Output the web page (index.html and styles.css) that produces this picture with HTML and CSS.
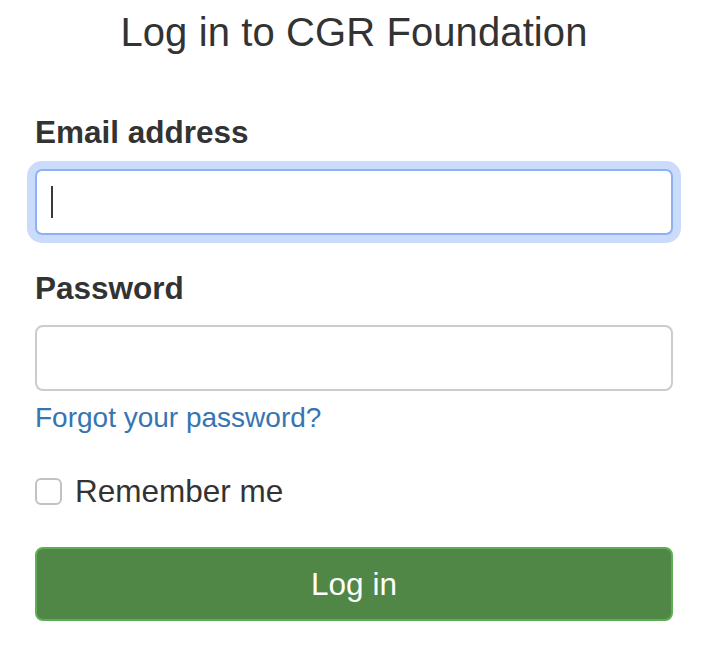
FILE: index.html
```html
<!DOCTYPE html>
<html lang="en">
<head>
<meta charset="utf-8">
<title>Log in to CGR Foundation</title>
<link rel="stylesheet" href="styles.css">
</head>
<body>
<main class="page">
  <h1 class="title">Log in to CGR Foundation</h1>
  <form class="login-form">
    <div class="form-group form-group-email">
      <label class="field-label" for="email">Email address</label>
      <div class="input-wrap">
        <input class="text-input is-focused" id="email" type="email" name="email">
        <span class="caret"></span>
      </div>
    </div>
    <div class="form-group form-group-password">
      <label class="field-label" for="password">Password</label>
      <input class="text-input" id="password" type="password" name="password">
      <a class="forgot-link" href="#">Forgot your password?</a>
    </div>
    <label class="remember">
      <input class="checkbox" type="checkbox" name="remember">
      <span>Remember me</span>
    </label>
    <button class="submit-btn" type="submit">Log in</button>
  </form>
</main>
</body>
</html>
```
FILE: styles.css
```css
* { box-sizing: border-box; }

html, body {
  margin: 0;
  padding: 0;
  background: #ffffff;
}

body {
  font-family: "Liberation Sans", Arial, Helvetica, sans-serif;
  color: #333333;
}

.page {
  width: 638px;
  margin-left: 35px;
  padding-top: 10px;
}

.title {
  margin: 0;
  font-size: 40px;
  line-height: 44px;
  font-weight: 400;
  text-align: center;
  letter-spacing: 0.1px;
  color: #333333;
}

.login-form {
  display: flex;
  flex-direction: column;
  margin-top: 60px;
}

.form-group {
  display: flex;
  flex-direction: column;
}

.form-group-password {
  margin-top: 35px;
}

.field-label {
  font-size: 31.5px;
  line-height: 36px;
  font-weight: 700;
  margin-bottom: 19px;
}

.input-wrap {
  position: relative;
}

.text-input {
  display: block;
  width: 100%;
  height: 66px;
  margin: 0;
  padding: 0 14px;
  border: 2px solid #cccccc;
  border-radius: 8px;
  background: #ffffff;
  font-family: inherit;
  font-size: 31.5px;
  color: #333333;
  outline: none;
  caret-color: transparent;
}

.text-input.is-focused {
  border-color: #8db2f3;
  box-shadow: 0 0 0 8px #cbdbfb;
  border-radius: 7px;
}

.caret {
  position: absolute;
  left: 16px;
  top: 17px;
  width: 2px;
  height: 32px;
  background: #3a3a3a;
}

.forgot-link {
  margin-top: 10px;
  font-size: 28px;
  line-height: 34px;
  color: #3674b2;
  text-decoration: none;
  align-self: flex-start;
}

.remember {
  display: flex;
  align-items: center;
  gap: 13px;
  margin-top: 38px;
  font-size: 31.5px;
  line-height: 36px;
  color: #333333;
}

.checkbox {
  appearance: none;
  -webkit-appearance: none;
  width: 27px;
  height: 27px;
  margin: 0;
  border: 2px solid #c2c2c2;
  border-radius: 6px;
  background: #ffffff;
  flex: none;
}

.submit-btn {
  margin-top: 38px;
  width: 100%;
  height: 74px;
  border: 2px solid #5fae55;
  border-radius: 8px;
  background: #508747;
  color: #ffffff;
  font-family: inherit;
  font-size: 31.5px;
  line-height: 36px;
  cursor: pointer;
}
```
